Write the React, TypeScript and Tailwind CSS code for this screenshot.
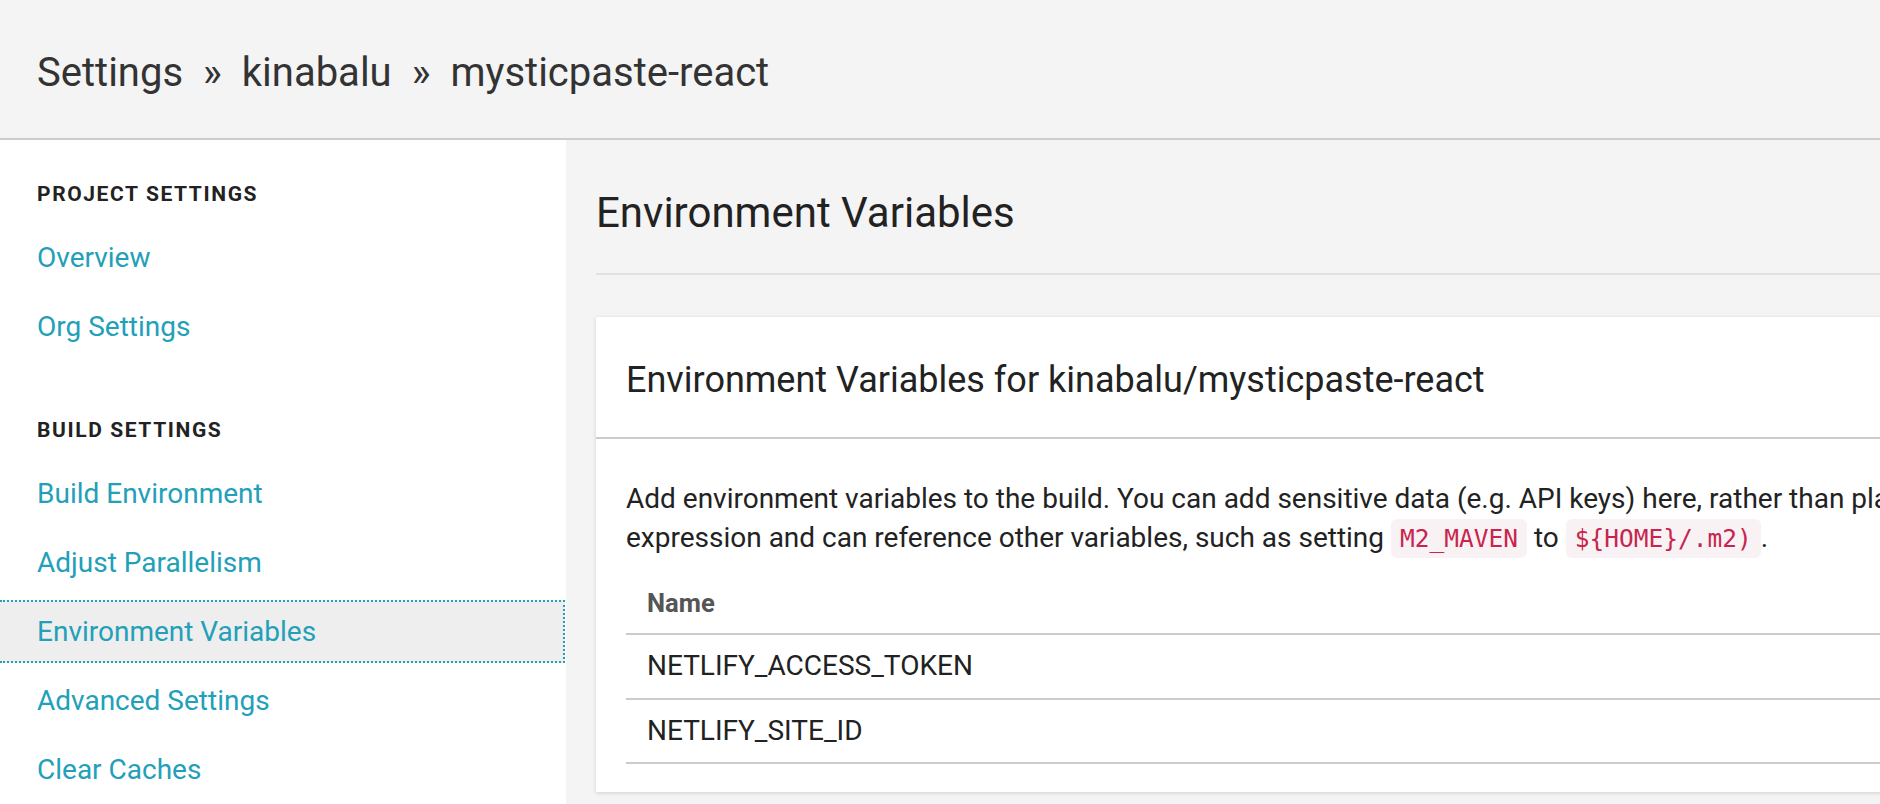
import React from 'react';

const teal = 'text-[#22a0b9]';

const NavItem: React.FC<{ label: string; active?: boolean }> = ({ label, active }) => (
  <a
    className={
      'flex items-center h-[63px] pl-[37px] text-[28px] ' +
      teal +
      (active ? ' bg-[#eeeeee] border-y-2 border-r-2 border-dotted border-[#22a0b9] mr-[1px]' : '')
    }
  >
    {label}
  </a>
);

const SectionTitle: React.FC<{ children: React.ReactNode }> = ({ children }) => (
  <div className="h-[30px] flex items-center pl-[37px] text-[21px] font-bold tracking-[1.6px] text-[#222]">
    {children}
  </div>
);

const Code: React.FC<{ children: React.ReactNode }> = ({ children }) => (
  <code className="px-[9px] py-[5px] rounded-[6px] bg-[#f9f2f4] text-[#c7254e] text-[24.5px] font-['DejaVu_Sans_Mono',monospace]">
    {children}
  </code>
);

export default function App() {
  const vars = ['NETLIFY_ACCESS_TOKEN', 'NETLIFY_SITE_ID'];

  return (
    <div className="w-[1880px] h-[804px] overflow-hidden bg-[#f4f4f4] font-['Roboto',sans-serif] text-[#222]">
      <header className="h-[140px] pt-[8px] border-b-2 border-[#cccccc] flex items-center pl-[37px] text-[40px] text-[#333]">
        <span>Settings</span>
        <span className="mx-[20px]">»</span>
        <span>kinabalu</span>
        <span className="mx-[20px]">»</span>
        <span>mysticpaste-react</span>
      </header>

      <div className="flex h-[664px]">
        <nav className="w-[566px] shrink-0 bg-white pt-[40px]">
          <SectionTitle>PROJECT SETTINGS</SectionTitle>
          <div className="mt-[16px] flex flex-col gap-[6px]">
            <NavItem label="Overview" />
            <NavItem label="Org Settings" />
          </div>
          <div className="mt-[58px]">
            <SectionTitle>BUILD SETTINGS</SectionTitle>
          </div>
          <div className="mt-[16px] flex flex-col gap-[6px]">
            <NavItem label="Build Environment" />
            <NavItem label="Adjust Parallelism" />
            <NavItem label="Environment Variables" active />
            <NavItem label="Advanced Settings" />
            <NavItem label="Clear Caches" />
          </div>
        </nav>

        <main className="flex-1 min-w-0 pl-[30px]">
          <div className="w-[1600px]">
            <div className="h-[135px] pt-[12px] flex items-center border-b-2 border-[#e2e2e2]">
              <h1 className="text-[42px] text-[#222]">Environment Variables</h1>
            </div>

            <section className="mt-[42px] bg-white shadow-[0_1px_4px_rgba(0,0,0,0.15)]">
              <div className="h-[122px] pt-[6px] flex items-center pl-[30px] border-b-2 border-[#cccccc]">
                <h2 className="text-[36px] text-[#222]">Environment Variables for kinabalu/mysticpaste-react</h2>
              </div>

              <div className="px-[30px] pt-[40px] pb-[28px]">
                <p className="text-[28px] leading-[39px] text-[#222] whitespace-nowrap">
                  Add environment variables to the build. You can add sensitive data (e.g. API keys) here, rather than placing them in the repository. The values can be any bash
                  <br />
                  expression and can reference other variables, such as setting <Code>M2_MAVEN</Code> to <Code>{'${HOME}/.m2)'}</Code>.
                </p>

                <table className="mt-[16px] w-full border-collapse text-[28px]">
                  <thead>
                    <tr className="border-b-2 border-[#cccccc]">
                      <th className="h-[60px] pl-[21px] text-left font-bold text-[#555] text-[25.6px]">Name</th>
                    </tr>
                  </thead>
                  <tbody>
                    {vars.map(v => (
                      <tr key={v} className="border-b-2 border-[#cccccc]">
                        <td className="h-[64.5px] pl-[21px] text-[#222]">{v}</td>
                      </tr>
                    ))}
                  </tbody>
                </table>
              </div>
            </section>
          </div>
        </main>
      </div>
    </div>
  );
}
